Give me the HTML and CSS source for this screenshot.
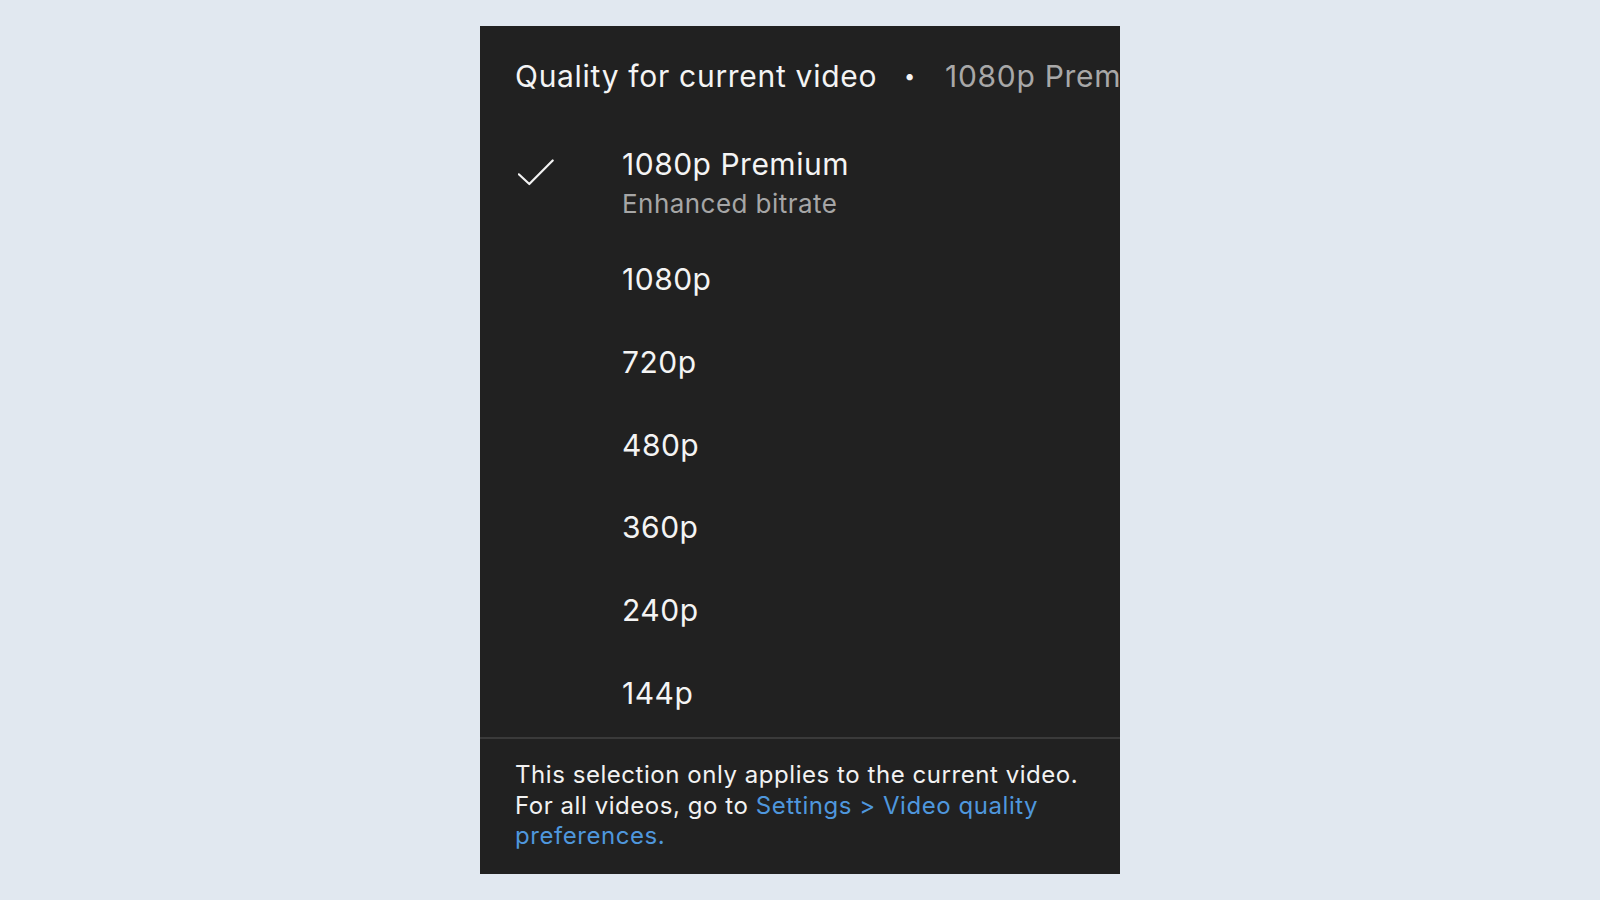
FILE: index.html
```html
<!DOCTYPE html>
<html lang="en">
<head>
<meta charset="utf-8">
<title>Quality for current video</title>
<link rel="stylesheet" href="styles.css">
</head>
<body>
<div class="sheet">
  <div class="header">
    <span class="title">Quality for current video</span>
    <span class="dot">•</span>
    <span class="current">1080p Premium</span>
  </div>
  <ul class="options">
    <li class="option option-selected">
      <svg class="check" width="36" height="27" viewBox="0 0 36 27" aria-hidden="true">
        <polyline points="0.8,15.3 11.3,25 34.7,1.5" fill="none" stroke="#f2f2f2" stroke-width="2.2" stroke-linecap="round" stroke-linejoin="round"/>
      </svg>
      <div class="option-text">
        <div class="option-label">1080p Premium</div>
        <div class="option-sub">Enhanced bitrate</div>
      </div>
    </li>
    <li class="option"><div class="option-label">1080p</div></li>
    <li class="option"><div class="option-label">720p</div></li>
    <li class="option"><div class="option-label">480p</div></li>
    <li class="option"><div class="option-label">360p</div></li>
    <li class="option"><div class="option-label">240p</div></li>
    <li class="option"><div class="option-label">144p</div></li>
  </ul>
  <div class="footer">
    <p class="note">This selection only applies to the current video. For all videos, go to <a class="link" href="#">Settings &gt; Video quality preferences.</a></p>
  </div>
</div>
</body>
</html>
```

FILE: styles.css
```css
html, body {
  margin: 0;
  padding: 0;
}

body {
  background: #e1e8f0;
  font-family: "Inter", "Roboto", "Liberation Sans", sans-serif;
  color: #f2f2f2;
  display: flex;
  justify-content: center;
  padding-top: 26px;
  height: 874px;
  overflow: hidden;
}

.sheet {
  width: 640px;
  height: 848px;
  background: #212121;
  display: flex;
  flex-direction: column;
  overflow: hidden;
}

.header {
  height: 104px;
  box-sizing: border-box;
  padding: 30px 0 0 35px;
  white-space: nowrap;
  overflow: hidden;
  font-size: 30px;
  line-height: 40px;
  letter-spacing: 0.7px;
  display: flex;
}

.title {
  color: #f4f4f4;
}

.dot {
  color: #f4f4f4;
  font-size: 20px;
  margin: 0 29px 0 27px;
}

.current {
  color: #a8a8a8;
}

.options {
  list-style: none;
  margin: 0;
  padding: 0;
}

.option {
  height: 82.7px;
  display: flex;
  align-items: center;
  padding-left: 142px;
}

.option-selected {
  height: 108px;
  box-sizing: border-box;
  padding: 14px 0 14px 38px;
  align-items: flex-start;
}

.check {
  margin-top: 15px;
  margin-right: 68px;
  flex: none;
}

.option-label {
  font-size: 30px;
  line-height: 40px;
  letter-spacing: 0.5px;
  color: #f4f4f4;
}

.option-sub {
  font-size: 26px;
  line-height: 40px;
  letter-spacing: 0.45px;
  color: #a6a6a6;
}

.footer {
  margin-top: 3px;
  border-top: 2px solid #3a3a3a;
  padding: 21px 40px 0 35px;
}

.note {
  margin: 0;
  font-size: 24px;
  line-height: 30.6px;
  letter-spacing: 0.55px;
  color: #f2f2f2;
}

.link {
  color: #4f97dd;
  text-decoration: none;
}
```
